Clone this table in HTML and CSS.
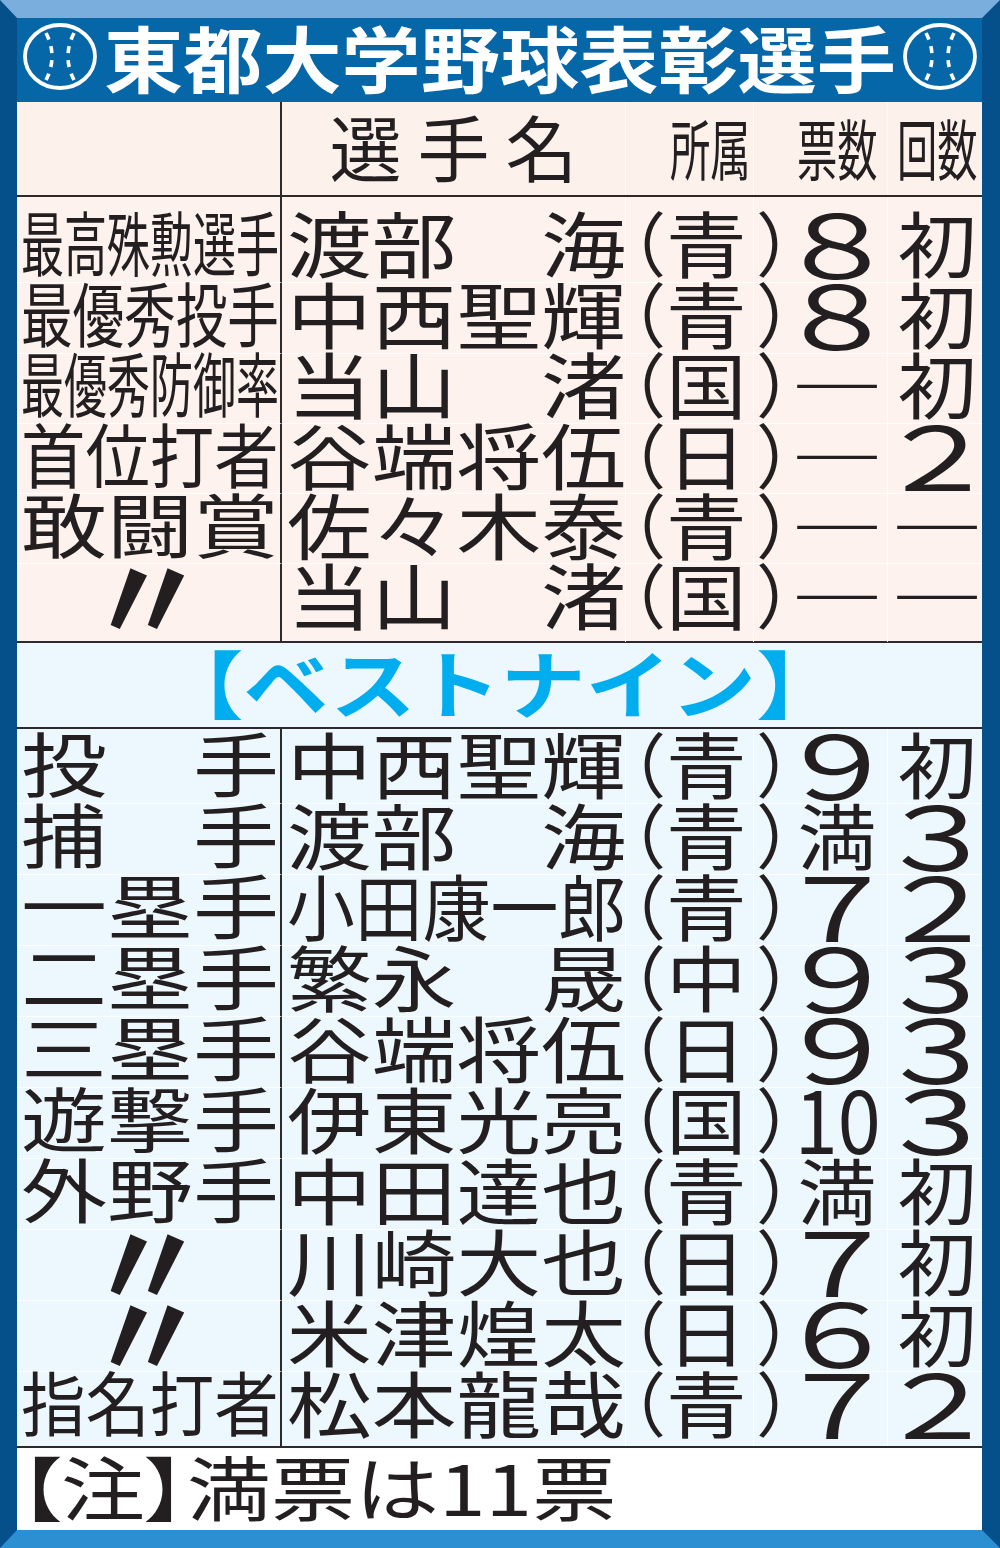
FILE: index.html
```html
<!DOCTYPE html>
<html lang="ja">
<head>
<meta charset="utf-8">
<title>東都大学野球表彰選手</title>
<link rel="stylesheet" href="styles.css">
</head>
<body>
<div class="frame">
  <div class="title">
    <svg class="ball" viewBox="0 0 74 67" aria-hidden="true">
      <ellipse cx="37" cy="33.5" rx="35" ry="31.5" fill="none" stroke="#fff" stroke-width="3.8"/>
      <path d="M23 10 Q35 33.5 23 57" fill="none" stroke="#fff" stroke-width="3.6" stroke-dasharray="7 7"/>
      <path d="M51 10 Q39 33.5 51 57" fill="none" stroke="#fff" stroke-width="3.6" stroke-dasharray="7 7"/>
    </svg>
    <h1 class="title-text">東都大学野球表彰選手</h1>
    <svg class="ball" viewBox="0 0 74 67" aria-hidden="true">
      <ellipse cx="37" cy="33.5" rx="35" ry="31.5" fill="none" stroke="#fff" stroke-width="3.8"/>
      <path d="M23 10 Q35 33.5 23 57" fill="none" stroke="#fff" stroke-width="3.6" stroke-dasharray="7 7"/>
      <path d="M51 10 Q39 33.5 51 57" fill="none" stroke="#fff" stroke-width="3.6" stroke-dasharray="7 7"/>
    </svg>
  </div>

  <div class="head-row">
    <div class="cell lab-cell"></div>
    <div class="cell h-name"><span class="t hn">選手名</span></div>
    <div class="cell h-sch"><span class="t hs">所属</span></div>
    <div class="cell h-vote"><span class="t hs">票数</span></div>
    <div class="cell h-time"><span class="t hs">回数</span></div>
  </div>

  <div class="sec pink">
    <div class="row">
      <div class="cell lab-cell"><span class="t lab c6">最高殊勲選手</span></div>
      <div class="cell name"><span class="t nm n4">渡部　海</span></div>
      <div class="cell sch"><span class="t po">（</span><span class="t sc">青</span><span class="t pc">）</span></div>
      <div class="cell vote"><span class="t dg">８</span></div>
      <div class="cell time"><span class="t kj">初</span></div>
    </div>
    <div class="row">
      <div class="cell lab-cell"><span class="t lab c5">最優秀投手</span></div>
      <div class="cell name"><span class="t nm n4">中西聖輝</span></div>
      <div class="cell sch"><span class="t po">（</span><span class="t sc">青</span><span class="t pc">）</span></div>
      <div class="cell vote"><span class="t dg">８</span></div>
      <div class="cell time"><span class="t kj">初</span></div>
    </div>
    <div class="row">
      <div class="cell lab-cell"><span class="t lab c6">最優秀防御率</span></div>
      <div class="cell name"><span class="t nm n4">当山　渚</span></div>
      <div class="cell sch"><span class="t po">（</span><span class="t sc">国</span><span class="t pc">）</span></div>
      <div class="cell vote"><span class="t ds">―</span></div>
      <div class="cell time"><span class="t kj">初</span></div>
    </div>
    <div class="row">
      <div class="cell lab-cell"><span class="t lab c4">首位打者</span></div>
      <div class="cell name"><span class="t nm n4">谷端将伍</span></div>
      <div class="cell sch"><span class="t po">（</span><span class="t sc">日</span><span class="t pc">）</span></div>
      <div class="cell vote"><span class="t ds">―</span></div>
      <div class="cell time"><span class="t dg">２</span></div>
    </div>
    <div class="row">
      <div class="cell lab-cell"><span class="t lab c3">敢闘賞</span></div>
      <div class="cell name"><span class="t nm n4">佐々木泰</span></div>
      <div class="cell sch"><span class="t po">（</span><span class="t sc">青</span><span class="t pc">）</span></div>
      <div class="cell vote"><span class="t ds">―</span></div>
      <div class="cell time"><span class="t ds">―</span></div>
    </div>
    <div class="row">
      <div class="cell lab-cell ditto-cell"><span class="t ditto">〃</span></div>
      <div class="cell name"><span class="t nm n4">当山　渚</span></div>
      <div class="cell sch"><span class="t po">（</span><span class="t sc">国</span><span class="t pc">）</span></div>
      <div class="cell vote"><span class="t ds">―</span></div>
      <div class="cell time"><span class="t ds">―</span></div>
    </div>
  </div>

  <div class="bn-head"><span class="t bn">【ベストナイン】</span></div>

  <div class="sec blue">
    <div class="row">
      <div class="cell lab-cell"><span class="t lab c3">投　手</span></div>
      <div class="cell name"><span class="t nm n4">中西聖輝</span></div>
      <div class="cell sch"><span class="t po">（</span><span class="t sc">青</span><span class="t pc">）</span></div>
      <div class="cell vote"><span class="t dg">９</span></div>
      <div class="cell time"><span class="t kj">初</span></div>
    </div>
    <div class="row">
      <div class="cell lab-cell"><span class="t lab c3">捕　手</span></div>
      <div class="cell name"><span class="t nm n4">渡部　海</span></div>
      <div class="cell sch"><span class="t po">（</span><span class="t sc">青</span><span class="t pc">）</span></div>
      <div class="cell vote"><span class="t kj">満</span></div>
      <div class="cell time"><span class="t dg">３</span></div>
    </div>
    <div class="row">
      <div class="cell lab-cell"><span class="t lab c3">一塁手</span></div>
      <div class="cell name"><span class="t nm n5">小田康一郎</span></div>
      <div class="cell sch"><span class="t po">（</span><span class="t sc">青</span><span class="t pc">）</span></div>
      <div class="cell vote"><span class="t dg">７</span></div>
      <div class="cell time"><span class="t dg">２</span></div>
    </div>
    <div class="row">
      <div class="cell lab-cell"><span class="t lab c3">二塁手</span></div>
      <div class="cell name"><span class="t nm n4">繁永　晟</span></div>
      <div class="cell sch"><span class="t po">（</span><span class="t sc">中</span><span class="t pc">）</span></div>
      <div class="cell vote"><span class="t dg">９</span></div>
      <div class="cell time"><span class="t dg">３</span></div>
    </div>
    <div class="row">
      <div class="cell lab-cell"><span class="t lab c3">三塁手</span></div>
      <div class="cell name"><span class="t nm n4">谷端将伍</span></div>
      <div class="cell sch"><span class="t po">（</span><span class="t sc">日</span><span class="t pc">）</span></div>
      <div class="cell vote"><span class="t dg">９</span></div>
      <div class="cell time"><span class="t dg">３</span></div>
    </div>
    <div class="row">
      <div class="cell lab-cell"><span class="t lab c3">遊撃手</span></div>
      <div class="cell name"><span class="t nm n4">伊東光亮</span></div>
      <div class="cell sch"><span class="t po">（</span><span class="t sc">国</span><span class="t pc">）</span></div>
      <div class="cell vote"><span class="t d2">10</span></div>
      <div class="cell time"><span class="t dg">３</span></div>
    </div>
    <div class="row">
      <div class="cell lab-cell"><span class="t lab c3">外野手</span></div>
      <div class="cell name"><span class="t nm n4">中田達也</span></div>
      <div class="cell sch"><span class="t po">（</span><span class="t sc">青</span><span class="t pc">）</span></div>
      <div class="cell vote"><span class="t kj">満</span></div>
      <div class="cell time"><span class="t kj">初</span></div>
    </div>
    <div class="row">
      <div class="cell lab-cell ditto-cell"><span class="t ditto">〃</span></div>
      <div class="cell name"><span class="t nm n4">川崎大也</span></div>
      <div class="cell sch"><span class="t po">（</span><span class="t sc">日</span><span class="t pc">）</span></div>
      <div class="cell vote"><span class="t dg">７</span></div>
      <div class="cell time"><span class="t kj">初</span></div>
    </div>
    <div class="row">
      <div class="cell lab-cell ditto-cell"><span class="t ditto">〃</span></div>
      <div class="cell name"><span class="t nm n4">米津煌太</span></div>
      <div class="cell sch"><span class="t po">（</span><span class="t sc">日</span><span class="t pc">）</span></div>
      <div class="cell vote"><span class="t dg">６</span></div>
      <div class="cell time"><span class="t kj">初</span></div>
    </div>
    <div class="row">
      <div class="cell lab-cell"><span class="t lab c4">指名打者</span></div>
      <div class="cell name"><span class="t nm n4">松本龍哉</span></div>
      <div class="cell sch"><span class="t po">（</span><span class="t sc">青</span><span class="t pc">）</span></div>
      <div class="cell vote"><span class="t dg">７</span></div>
      <div class="cell time"><span class="t dg">２</span></div>
    </div>
  </div>

  <div class="foot"><span class="t ft">【注】満票は11票</span></div>
</div>
</body>
</html>
```

FILE: styles.css
```css
* { box-sizing: border-box; margin: 0; padding: 0; }
html, body { background: #ffffff; overflow: hidden; }
body {
  font-family: "Noto Sans CJK JP", "Noto Sans CJK SC", sans-serif;
  color: #231f20;
}

.frame {
  width: 1000px;
  height: 1548px;
  border-style: solid;
  border-width: 18px 18px 18px 17px;
  border-color: #7aaedd #05508a #2b8fd1 #05508a;
  display: flex;
  flex-direction: column;
}

/* title bar */
.title {
  height: 84px;
  flex: none;
  background: #0567a8;
  display: flex;
  align-items: center;
  justify-content: space-between;
  padding: 0 5px 0 6px;
}
.ball { width: 74px; height: 67px; margin-top: -8px; flex: none; }
.title-text {
  color: #fff;
  font-size: 72px;
  font-weight: 700;
  line-height: 1;
  white-space: nowrap;
  transform: translateY(-4px) scaleX(1.1);
}

/* generic text piece */
.t { display: inline-block; flex: none; line-height: 1; white-space: nowrap; }

/* grid rows */
.head-row, .row {
  display: grid;
  grid-template-columns: 265px 343px 128px 134px 95px;
  grid-template-rows: minmax(0, 1fr);
}
.head-row {
  height: 95px;
  flex: none;
  background: #fdf1ec;
  border-bottom: 2px solid #2e2a2b;
}
.cell { display: flex; align-items: center; min-width: 0; min-height: 0; }
.lab-cell { border-right: 2px solid #2e2a2b; padding-left: 4px; }
.sch, .vote, .time, .h-sch, .h-vote, .h-time { border-left: 1px solid rgba(255,255,255,.85); }

.h-name { justify-content: center; }
.hn { font-size: 72px; letter-spacing: 16px; padding-left: 16px; transform: translateY(-4px); }
.hs { font-size: 66px; transform-origin: left center; transform: translateY(-3px) scaleX(.61); }
.h-sch { padding-left: 44px; }
.h-vote { padding-left: 43px; }
.h-time { padding-left: 9px; }

.sec { flex: none; border-bottom: 2px solid #2e2a2b; }
.sec.pink { height: 446px; background: #fdf2ee; }
.sec.blue { height: 719px; background: #ecf8fd; }

.pink .row { height: 70.3px; }
.pink .row:first-child { height: 85.3px; }
.pink .row:first-child > .cell { padding-top: 15px; }
.pink .row:last-child { height: 79px; }
.pink .row:last-child > .cell { padding-bottom: 9px; }

.blue .row { height: 71px; }
.blue .row:first-child { height: 74px; }
.blue .row:first-child > .cell { padding-top: 3px; }
.blue .row:last-child { height: 75px; }
.blue .row:last-child > .cell { padding-bottom: 4px; }

.row + .row > .cell { border-top: 1px solid rgba(255,255,255,.85); }

/* label column */
.lab { font-size: 70px; transform-origin: left center; }
.c6 { transform: translateY(-6px) scaleX(.614); }
.c5 { transform: translateY(-6px) scaleX(.737); }
.c4 { transform: translateY(-6px) scaleX(.92); }
.c3 { transform: translateY(-6px) scaleX(1.229); }
.ditto-cell { justify-content: center; }
.ditto { font-size: 120px; font-weight: 700; transform: translate(-3px, -8px); }

/* name column */
.name { padding-left: 5px; }
.nm { font-size: 72px; transform-origin: left center; }
.n4 { transform: translateY(-6px) scaleX(1.177); }
.n5 { transform: translateY(-6px) scaleX(.942); }

/* school column */
.sch { padding-left: 0; }
.po, .pc { font-size: 70px; transform: translateY(-6px); }
.po { width: 70px; margin-left: -30px; }
.pc { width: 36px; }
.sc { font-size: 72px; width: 90px; transform-origin: left center; transform: translateY(-6px) scaleX(1.12); }

/* votes / times */
.vote { justify-content: center; padding-left: 34px; }
.time { justify-content: center; padding-left: 4px; }
.kj { font-size: 72px; transform: translateY(-6px) scaleX(1.1); }
.dg { font-size: 88px; transform: translateY(-6px) scaleX(1.4); }
.ds { font-size: 72px; font-weight: 700; transform: translateY(-6px) scaleX(1.3); }
.d2 { font-size: 86px; transform: translateY(-6px) scaleX(.9); }

/* best nine header */
.bn-head {
  height: 86px;
  flex: none;
  background: #ecf8fd;
  border-bottom: 2px solid #2e2a2b;
  display: flex;
  align-items: center;
  justify-content: center;
}
.bn {
  color: #00aeef;
  font-size: 74px;
  font-weight: 700;
  transform: translateY(-4px) scaleX(1.15);
}

/* footnote */
.foot {
  flex: 1;
  background: #fff;
  display: flex;
  align-items: center;
  padding-left: 2px;
}
.ft {
  font-size: 70px;
  font-feature-settings: "palt";
  transform-origin: left center;
  transform: translateY(-3px) scaleX(1.2);
}
```
